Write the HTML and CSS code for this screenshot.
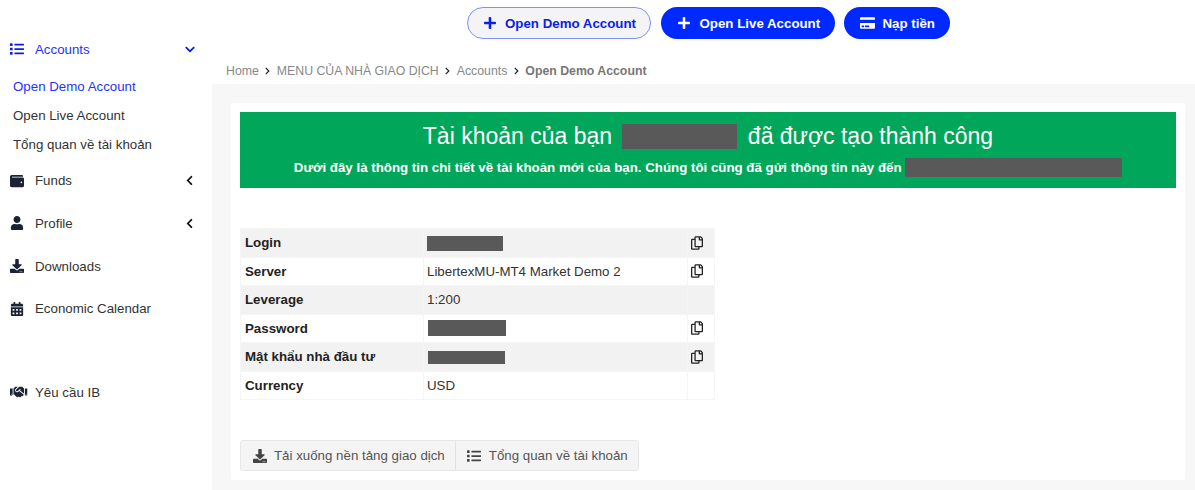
FILE: index.html
```html
<!DOCTYPE html>
<html lang="vi">
<head>
<meta charset="utf-8">
<title>Open Demo Account</title>
<link rel="stylesheet" href="styles.css">
</head>
<body>
<svg class="sprite" aria-hidden="true">
  <symbol id="i-list" viewBox="0 0 512 512"><path d="M80 368H16a16 16 0 0 0-16 16v64a16 16 0 0 0 16 16h64a16 16 0 0 0 16-16v-64a16 16 0 0 0-16-16zm0-320H16A16 16 0 0 0 0 64v64a16 16 0 0 0 16 16h64a16 16 0 0 0 16-16V64a16 16 0 0 0-16-16zm0 160H16a16 16 0 0 0-16 16v64a16 16 0 0 0 16 16h64a16 16 0 0 0 16-16v-64a16 16 0 0 0-16-16zm416 176H176a16 16 0 0 0-16 16v32a16 16 0 0 0 16 16h320a16 16 0 0 0 16-16v-32a16 16 0 0 0-16-16zm0-320H176a16 16 0 0 0-16 16v32a16 16 0 0 0 16 16h320a16 16 0 0 0 16-16V80a16 16 0 0 0-16-16zm0 160H176a16 16 0 0 0-16 16v32a16 16 0 0 0 16 16h320a16 16 0 0 0 16-16v-32a16 16 0 0 0-16-16z"/></symbol>
  <symbol id="i-wallet" viewBox="0 0 512 512"><path d="M461 128H80a16 16 0 0 1 0-32h384c9 0 16-7 16-16 0-27-21-48-48-48H64C29 32 0 61 0 96v320c0 35 29 64 64 64h397c28 0 51-22 51-48V176c0-26-23-48-51-48zm-45 208a32 32 0 1 1 0-64 32 32 0 0 1 0 64z"/></symbol>
  <symbol id="i-user" viewBox="0 0 448 512"><path d="M224 256c70.7 0 128-57.3 128-128S294.7 0 224 0 96 57.3 96 128s57.3 128 128 128zm89.6 32h-16.7c-22.2 10.2-46.9 16-72.9 16s-50.6-5.8-72.9-16h-16.7C60.2 288 0 348.2 0 422.4V464c0 26.5 21.5 48 48 48h352c26.5 0 48-21.5 48-48v-41.6c0-74.2-60.2-134.4-134.4-134.4z"/></symbol>
  <symbol id="i-download" viewBox="0 0 512 512"><path d="M216 0h80c13.3 0 24 10.7 24 24v168h87.7c17.8 0 26.7 21.5 14.1 34.1L269.7 378.3c-7.5 7.5-19.8 7.5-27.3 0L90.1 226.1c-12.6-12.6-3.7-34.1 14.1-34.1H192V24c0-13.3 10.7-24 24-24zm296 376v112c0 13.3-10.7 24-24 24H24c-13.3 0-24-10.7-24-24V376c0-13.3 10.7-24 24-24h146.7l49 49c20.1 20.1 52.5 20.1 72.6 0l49-49H488c13.3 0 24 10.7 24 24zm-124 88c0-11-9-20-20-20s-20 9-20 20 9 20 20 20 20-9 20-20zm64 0c0-11-9-20-20-20s-20 9-20 20 9 20 20 20 20-9 20-20z"/></symbol>
  <symbol id="i-calendar" viewBox="0 0 448 512"><path d="M0 464c0 26.500 21.500 48 48 48h352c26.500 0 48-21.500 48-48V192H0v272zm320-196c0-6.600 5.400-12 12-12h40c6.600 0 12 5.400 12 12v40c0 6.600-5.400 12-12 12h-40c-6.600 0-12-5.400-12-12v-40zm0 128c0-6.600 5.400-12 12-12h40c6.600 0 12 5.400 12 12v40c0 6.600-5.400 12-12 12h-40c-6.600 0-12-5.400-12-12v-40zM192 268c0-6.600 5.400-12 12-12h40c6.600 0 12 5.400 12 12v40c0 6.600-5.400 12-12 12h-40c-6.600 0-12-5.400-12-12v-40zm0 128c0-6.600 5.400-12 12-12h40c6.600 0 12 5.400 12 12v40c0 6.600-5.400 12-12 12h-40c-6.600 0-12-5.400-12-12v-40zM64 268c0-6.600 5.400-12 12-12h40c6.600 0 12 5.400 12 12v40c0 6.600-5.400 12-12 12H76c-6.600 0-12-5.400-12-12v-40zm0 128c0-6.600 5.400-12 12-12h40c6.600 0 12 5.400 12 12v40c0 6.600-5.400 12-12 12H76c-6.600 0-12-5.400-12-12v-40zM400 64h-48V16c0-8.800-7.200-16-16-16h-32c-8.800 0-16 7.200-16 16v48H160V16c0-8.800-7.200-16-16-16h-32c-8.800 0-16 7.200-16 16v48H48C21.500 64 0 85.500 0 112v48h448v-48c0-26.500-21.500-48-48-48z"/></symbol>
  <symbol id="i-handshake" viewBox="0 0 640 512"><path d="M434.7 64h-85.900c-8 0-15.700 3-21.600 8.400l-98.300 90c-.1.100-.2.300-.3.400-16.600 15.600-16.300 40.500-2.100 56 12.700 13.900 39.400 17.600 56.100 2.700.1-.1.300-.1.400-.2l79.900-73.200c6.500-5.900 16.700-5.500 22.600 1 6 6.500 5.500 16.600-1 22.600l-26.100 23.900L504 313.800c2.900 2.400 5.500 5 7.900 7.700V128l-54.600-54.600c-5.900-6-14.100-9.400-22.600-9.400zM544 128.200v223.900c0 17.700 14.300 32 32 32h64V128.200h-96zm48 223.900c-8.800 0-16-7.200-16-16s7.200-16 16-16 16 7.200 16 16-7.200 16-16 16zM0 384h64c17.700 0 32-14.300 32-32V128.200H0V384zm48-63.900c8.800 0 16 7.200 16 16s-7.200 16-16 16-16-7.200-16-16c0-8.900 7.200-16 16-16zm435.900 18.600L334.600 217.500l-30 27.500c-29.700 27.100-75.200 24.500-101.700-4.400-26.900-29.400-24.800-74.900 4.400-101.700L289.100 64h-83.800c-8.500 0-16.600 3.400-22.600 9.400L128 128v223.900h18.300l90.500 81.900c27.400 22.300 67.700 18.100 90-9.300l.2-.2 17.900 15.500c15.900 13 39.400 10.500 52.300-5.400l31.400-38.600 5.400 4.400c13.700 11.100 33.900 9.100 45-4.700l9.500-11.700c11.200-13.800 9.100-33.900-4.600-45.100z"/></symbol>
  <symbol id="i-copy" viewBox="0 0 448 512"><path d="M433.900 65.900l-51.900-51.900A48 48 0 0 0 348.100 0H176c-26.500 0-48 21.500-48 48v48H48c-26.500 0-48 21.500-48 48v320c0 26.500 21.500 48 48 48h224c26.500 0 48-21.500 48-48v-48h80c26.500 0 48-21.500 48-48V99.900a48 48 0 0 0-14.100-34zM266 464H54a6 6 0 0 1-6-6V150a6 6 0 0 1 6-6h74v224c0 26.500 21.500 48 48 48h96v42a6 6 0 0 1-6 6zm128-96H182a6 6 0 0 1-6-6V54a6 6 0 0 1 6-6h106v88c0 13.300 10.700 24 24 24h88v202a6 6 0 0 1-6 6zm6-256h-64V48h9.600c1.600 0 3.100.6 4.200 1.800l48.400 48.400a6 6 0 0 1 1.800 4.200V112z"/></symbol>
  <symbol id="i-plus" viewBox="0 0 448 512"><path d="M416 208H272V64c0-17.700-14.300-32-32-32h-32c-17.700 0-32 14.300-32 32v144H32c-17.700 0-32 14.300-32 32v32c0 17.700 14.300 32 32 32h144v144c0 17.700 14.300 32 32 32h32c17.700 0 32-14.300 32-32V304h144c17.700 0 32-14.300 32-32v-32c0-17.700-14.300-32-32-32z"/></symbol>
  <symbol id="i-card" viewBox="0 0 576 512"><path d="M0 432c0 26.500 21.500 48 48 48h480c26.500 0 48-21.500 48-48V256H0v176zm192-68c0-6.600 5.400-12 12-12h136c6.600 0 12 5.400 12 12v40c0 6.600-5.400 12-12 12H204c-6.600 0-12-5.400-12-12v-40zm-128 0c0-6.600 5.400-12 12-12h72c6.600 0 12 5.400 12 12v40c0 6.600-5.400 12-12 12H76c-6.600 0-12-5.400-12-12v-40zM576 80v48H0V80c0-26.500 21.500-48 48-48h480c26.500 0 48 21.500 48 48z"/></symbol>
  <symbol id="i-left" viewBox="0 0 320 512"><path d="M34.500 239L228.900 44.700c9.400-9.400 24.600-9.400 33.900 0l22.700 22.700c9.400 9.400 9.400 24.500 0 33.900L131.500 256l154 154.700c9.300 9.400 9.300 24.500 0 33.900l-22.700 22.700c-9.400 9.400-24.600 9.400-33.900 0L34.500 273c-9.400-9.400-9.400-24.600 0-34z"/></symbol>
  <symbol id="i-right" viewBox="0 0 320 512"><path d="M285.500 273L91.100 467.300c-9.400 9.400-24.600 9.400-33.900 0l-22.700-22.700c-9.400-9.400-9.400-24.500 0-33.900L188.500 256 34.500 101.300c-9.300-9.400-9.300-24.500 0-33.900l22.700-22.700c9.400-9.400 24.600-9.400 33.900 0L285.400 239c9.400 9.400 9.400 24.600.1 34z"/></symbol>
  <symbol id="i-down" viewBox="0 0 448 512"><path d="M207 381.500L12.700 187.100c-9.400-9.400-9.400-24.600 0-33.900l22.700-22.700c9.400-9.400 24.500-9.400 33.900 0L224 284.500l154.700-154c9.400-9.300 24.500-9.300 33.900 0l22.700 22.700c9.400 9.400 9.400 24.600 0 33.900L241 381.500c-9.400 9.400-24.600 9.400-34 0z"/></symbol>
</svg>

<div class="layout">
  <nav class="sidebar">
    <a class="nav-item nav-item-open">
      <svg class="nav-icon"><use href="#i-list"/></svg>
      <span class="nav-label">Accounts</span>
      <svg class="nav-caret nav-caret-down"><use href="#i-down"/></svg>
    </a>
    <div class="submenu">
      <a class="sub-item sub-item-active">Open Demo Account</a>
      <a class="sub-item">Open Live Account</a>
      <a class="sub-item">Tổng quan về tài khoản</a>
    </div>
    <a class="nav-item">
      <svg class="nav-icon"><use href="#i-wallet"/></svg>
      <span class="nav-label">Funds</span>
      <svg class="nav-caret"><use href="#i-left"/></svg>
    </a>
    <a class="nav-item">
      <svg class="nav-icon"><use href="#i-user"/></svg>
      <span class="nav-label">Profile</span>
      <svg class="nav-caret"><use href="#i-left"/></svg>
    </a>
    <a class="nav-item">
      <svg class="nav-icon"><use href="#i-download"/></svg>
      <span class="nav-label">Downloads</span>
    </a>
    <a class="nav-item">
      <svg class="nav-icon"><use href="#i-calendar"/></svg>
      <span class="nav-label">Economic Calendar</span>
    </a>
    <a class="nav-item nav-item-ib">
      <svg class="nav-icon nav-icon-wide"><use href="#i-handshake"/></svg>
      <span class="nav-label nav-label-ib">Yêu cầu IB</span>
    </a>
  </nav>

  <div class="main">
    <div class="topbar">
      <a class="pill pill-outline"><svg class="pill-icon"><use href="#i-plus"/></svg>Open Demo Account</a>
      <a class="pill pill-solid"><svg class="pill-icon"><use href="#i-plus"/></svg>Open Live Account</a>
      <a class="pill pill-solid pill-short"><svg class="pill-icon pill-icon-card"><use href="#i-card"/></svg>Nạp tiền</a>
    </div>

    <div class="breadcrumb">
      <span>Home</span><svg class="crumb-sep"><use href="#i-right"/></svg>
      <span>MENU CỦA NHÀ GIAO DỊCH</span><svg class="crumb-sep"><use href="#i-right"/></svg>
      <span>Accounts</span><svg class="crumb-sep"><use href="#i-right"/></svg>
      <strong>Open Demo Account</strong>
    </div>

    <div class="content">
      <section class="card">
        <div class="banner">
          <h1 class="banner-title">Tài khoản của bạn <span class="redact redact-title"></span> đã được tạo thành công</h1>
          <p class="banner-sub">Dưới đây là thông tin chi tiết về tài khoản mới của bạn. Chúng tôi cũng đã gửi thông tin này đến <span class="redact redact-email"></span></p>
        </div>

        <table class="details">
          <tr>
            <th>Login</th>
            <td><span class="redact redact-login"></span></td>
            <td class="copy-cell"><svg class="copy"><use href="#i-copy"/></svg></td>
          </tr>
          <tr>
            <th>Server</th>
            <td>LibertexMU-MT4 Market Demo 2</td>
            <td class="copy-cell"><svg class="copy"><use href="#i-copy"/></svg></td>
          </tr>
          <tr>
            <th>Leverage</th>
            <td>1:200</td>
            <td class="copy-cell"></td>
          </tr>
          <tr>
            <th>Password</th>
            <td><span class="redact redact-pass"></span></td>
            <td class="copy-cell"><svg class="copy"><use href="#i-copy"/></svg></td>
          </tr>
          <tr>
            <th>Mật khẩu nhà đầu tư</th>
            <td><span class="redact redact-invest"></span></td>
            <td class="copy-cell"><svg class="copy"><use href="#i-copy"/></svg></td>
          </tr>
          <tr>
            <th>Currency</th>
            <td>USD</td>
            <td class="copy-cell"></td>
          </tr>
        </table>

        <div class="btn-group">
          <a class="btn"><svg class="btn-icon"><use href="#i-download"/></svg>Tải xuống nền tảng giao dịch</a>
          <a class="btn"><svg class="btn-icon"><use href="#i-list"/></svg>Tổng quan về tài khoản</a>
        </div>
      </section>
    </div>
  </div>
</div>
</body>
</html>
```

FILE: styles.css
```css
* { box-sizing: border-box; }

html, body {
  margin: 0;
  height: 490px;
  overflow: hidden;
  background: #fff;
  font-family: "Liberation Sans", Arial, sans-serif;
  font-size: 13.3px;
  color: #333;
}

.sprite { display: none; }

.layout { display: flex; height: 490px; }

/* Sidebar */
.sidebar {
  width: 212px;
  flex: none;
  padding-top: 28px;
  display: flex;
  flex-direction: column;
}

.nav-item {
  display: flex;
  align-items: center;
  height: 42.7px;
  padding-left: 10px;
  color: #333;
}

.nav-item-open { color: #2233ff; }
.nav-item-ib { margin-top: 41px; }

.nav-icon {
  width: 14px;
  height: 14px;
  fill: #1a2233;
  flex: none;
}

.nav-item-open .nav-icon,
.nav-item-open .nav-caret { fill: #0a1fe0; }

.nav-icon-wide { width: 17.5px; }

.nav-label { margin-left: 11px; }
.nav-label-ib { margin-left: 7.5px; }

.nav-caret {
  width: 9px;
  height: 11px;
  margin-left: auto;
  margin-right: 18px;
  fill: #111;
  flex: none;
}

.nav-caret-down { width: 10px; margin-right: 17px; }

.submenu {
  display: flex;
  flex-direction: column;
  margin-top: 1px;
  margin-bottom: -0.5px;
}

.sub-item {
  height: 29.4px;
  line-height: 29.4px;
  padding-left: 13px;
  color: #333;
}

.sub-item-active { color: #2233ff; }

/* Main column */
.main {
  flex: 1;
  min-width: 0;
  display: flex;
  flex-direction: column;
}

.topbar {
  display: flex;
  gap: 9.5px;
  height: 46px;
  padding: 7px 0 0 255px;
}

.pill {
  display: flex;
  align-items: center;
  height: 32px;
  padding: 0 12px 0 17px;
  border-radius: 16px;
  font-weight: 700;
  white-space: nowrap;
}

.pill-outline {
  width: 184px;
  padding-left: 16px;
  background: #f4f4f6;
  border: 1px solid #7f8fff;
  color: #0a22e8;
  fill: #0a22e8;
}

.pill-outline .pill-icon { margin-right: 9px; }

.pill-solid {
  width: 174px;
  background: #0029ff;
  color: #fff;
  fill: #fff;
}

.pill-short { width: 105.5px; padding-left: 15.5px; }

.pill-icon {
  width: 12px;
  height: 14px;
  margin-right: 10px;
  flex: none;
}

.pill-icon-card { width: 15px; margin-right: 8px; }

.breadcrumb {
  display: flex;
  align-items: center;
  height: 38px;
  padding: 11px 0 0 14px;
  font-size: 12.3px;
  color: #888;
}

.breadcrumb strong { color: #777; }

.crumb-sep {
  width: 7px;
  height: 8px;
  margin: 0 5.5px;
  fill: #222;
  flex: none;
}

.content {
  flex: 1;
  background: #f7f7f7;
  padding: 19px 10px 10px 19px;
}

.card {
  height: 377px;
  background: #fff;
  padding: 9px;
  border-radius: 2px;
}

/* Banner */
.banner {
  height: 76px;
  padding-top: 9px;
  background: #00a65a;
  color: #fff;
  text-align: center;
}

.banner-title {
  margin: 0;
  height: 30px;
  font-size: 23px;
  line-height: 30px;
  font-weight: 400;
}

.banner-sub {
  margin: 7px 0 0;
  font-size: 13.3px;
  line-height: 19px;
  font-weight: 700;
}

.redact {
  display: inline-block;
  background: #595959;
  vertical-align: middle;
}

.redact-title { width: 115px; height: 25px; margin: 0 4px; vertical-align: -5px; }
.redact-email { width: 217px; height: 19px; vertical-align: -5px; }
.redact-login { width: 76px; height: 15px; }
.redact-pass { width: 78px; height: 16px; margin-left: 1px; }
.redact-invest { width: 77px; height: 13px; margin-left: 1px; }

/* Details table */
.details {
  width: 475px;
  margin-top: 40px;
  border-collapse: collapse;
  table-layout: fixed;
}

.details tr { height: 28.5px; }
.details tr:nth-child(odd) { background: #f2f2f2; }

.details th,
.details td {
  padding: 0 3px;
  font-size: 13.3px;
  text-align: left;
  border: 1px solid #f5f5f5;
}

.details th {
  width: 183px;
  padding-left: 4px;
  color: #222;
}

.details td.copy-cell { width: 27px; padding-left: 3px; }

.copy {
  display: block;
  width: 12px;
  height: 14px;
  fill: #222;
}

/* Bottom buttons */
.btn-group {
  display: inline-flex;
  margin-top: 40px;
  height: 31px;
  border: 1px solid #e7e7e7;
  border-radius: 3px;
  background: #f4f4f4;
  color: #555;
}

.btn {
  display: flex;
  align-items: center;
  padding: 0 10px 0 12px;
}

.btn + .btn { border-left: 1px solid #e2e2e2; padding-left: 11px; }

.btn-icon {
  width: 14px;
  height: 14px;
  margin-right: 7px;
  fill: #444;
  flex: none;
}

.btn + .btn .btn-icon { margin-right: 8px; }
```
